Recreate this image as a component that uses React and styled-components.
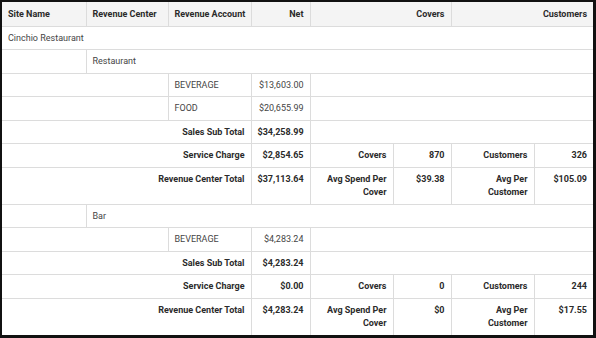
import React from 'react';
import styled, { createGlobalStyle, css } from 'styled-components';

const GlobalStyle = createGlobalStyle`
  html, body { margin: 0; padding: 0; background: #fff; }
  body { font-family: Roboto, "Liberation Sans", sans-serif; }
`;

const Frame = styled.div`
  box-sizing: border-box;
  width: 596px;
  height: 338px;
  border: 2px solid #111;
  border-right-width: 3px;
  border-bottom-width: 3px;
  overflow: hidden;
  background: #fff;
`;

const Table = styled.table`
  width: 591px;
  border-collapse: collapse;
  table-layout: fixed;
  font-size: 9px;
  line-height: 13.5px;
  color: #454545;
`;

const HeadCell = styled.th`
  background: #f4f4f4;
  color: #2b2b2b;
  font-weight: 700;
  white-space: nowrap;
  padding: 6px 6px 4px;
  border: 1px solid #dcdcdc;
  border-top: none;
  text-align: ${p => (p.right ? 'right' : 'left')};
  &:first-child { border-left: none; }
  &:last-child { border-right: none; }
`;

const Cell = styled.td`
  padding: 5px 6px 4px;
  border: 1px solid #dcdcdc;
  vertical-align: top;
  text-align: ${p => (p.right ? 'right' : 'left')};
  white-space: nowrap;
  &:first-child { border-left: none; }
  &:last-child { border-right: none; }
  ${p =>
    p.bold &&
    css`
      font-weight: 700;
      color: #2b2b2b;
    `}
`;

const widths = [84, 82, 83, 59, 83, 58, 83, 59];

const centers = [
  {
    name: 'Restaurant',
    accounts: [
      ['BEVERAGE', '$13,603.00'],
      ['FOOD', '$20,655.99'],
    ],
    subTotal: '$34,258.99',
    service: '$2,854.65',
    covers: '870',
    customers: '326',
    total: '$37,113.64',
    avgCover: '$39.38',
    avgCustomer: '$105.09',
  },
  {
    name: 'Bar',
    accounts: [['BEVERAGE', '$4,283.24']],
    subTotal: '$4,283.24',
    service: '$0.00',
    covers: '0',
    customers: '244',
    total: '$4,283.24',
    avgCover: '$0',
    avgCustomer: '$17.55',
  },
];

const CenterRows = ({ c }) => (
  <>
    <tr>
      <Cell />
      <Cell colSpan={7}>{c.name}</Cell>
    </tr>
    {c.accounts.map(([acc, net]) => (
      <tr key={acc}>
        <Cell colSpan={2} />
        <Cell>{acc}</Cell>
        <Cell right>{net}</Cell>
        <Cell colSpan={4} />
      </tr>
    ))}
    <tr>
      <Cell colSpan={3} right bold>Sales Sub Total</Cell>
      <Cell right bold>{c.subTotal}</Cell>
      <Cell colSpan={4} />
    </tr>
    <tr>
      <Cell colSpan={3} right bold>Service Charge</Cell>
      <Cell right bold>{c.service}</Cell>
      <Cell right bold>Covers</Cell>
      <Cell right bold>{c.covers}</Cell>
      <Cell right bold>Customers</Cell>
      <Cell right bold>{c.customers}</Cell>
    </tr>
    <tr>
      <Cell colSpan={3} right bold>Revenue Center Total</Cell>
      <Cell right bold>{c.total}</Cell>
      <Cell right bold>Avg Spend Per<br />Cover</Cell>
      <Cell right bold>{c.avgCover}</Cell>
      <Cell right bold>Avg Per<br />Customer</Cell>
      <Cell right bold>{c.avgCustomer}</Cell>
    </tr>
  </>
);

export default function App() {
  return (
    <>
      <GlobalStyle />
      <Frame>
        <Table>
          <colgroup>
            {widths.map((w, i) => (
              <col key={i} style={{ width: w }} />
            ))}
          </colgroup>
          <thead>
            <tr>
              <HeadCell>Site Name</HeadCell>
              <HeadCell>Revenue Center</HeadCell>
              <HeadCell>Revenue Account</HeadCell>
              <HeadCell right>Net</HeadCell>
              <HeadCell right colSpan={2}>Covers</HeadCell>
              <HeadCell right colSpan={2}>Customers</HeadCell>
            </tr>
          </thead>
          <tbody>
            <tr>
              <Cell colSpan={8}>Cinchio Restaurant</Cell>
            </tr>
            {centers.map(c => (
              <CenterRows key={c.name} c={c} />
            ))}
          </tbody>
        </Table>
      </Frame>
    </>
  );
}
